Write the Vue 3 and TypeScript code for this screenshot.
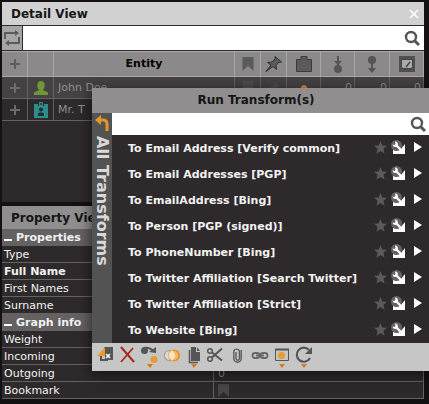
<script setup lang="ts">
import { ref } from 'vue'

interface Entity { name: string; kind: 'person' | 'badge'; counts: number[] }
interface Property { label: string; value: string; bold?: boolean }
interface Group { title: string; rows: Property[] }

const entityFilter = ref('')
const transformFilter = ref('')

const entities: Entity[] = [
  { name: 'John Doe', kind: 'person', counts: [0, 0, 0] },
  { name: 'Mr. T', kind: 'badge', counts: [] },
]

const groups: Group[] = [
  {
    title: 'Properties',
    rows: [
      { label: 'Type', value: '' },
      { label: 'Full Name', value: '', bold: true },
      { label: 'First Names', value: '' },
      { label: 'Surname', value: '' },
    ],
  },
  {
    title: 'Graph info',
    rows: [
      { label: 'Weight', value: '' },
      { label: 'Incoming', value: '' },
      { label: 'Outgoing', value: '0' },
      { label: 'Bookmark', value: 'bookmark' },
    ],
  },
]

const transforms: string[] = [
  'To Email Address [Verify common]',
  'To Email Addresses [PGP]',
  'To EmailAddress [Bing]',
  'To Person [PGP (signed)]',
  'To PhoneNumber [Bing]',
  'To Twitter Affiliation [Search Twitter]',
  'To Twitter Affiliation [Strict]',
  'To Website [Bing]',
]
</script>

<template>
  <main class="desk">
    <section class="panel detail">
      <header class="title active">
        <h2>Detail View</h2>
        <button class="close" aria-label="Close">
          <svg width="10" height="10" viewBox="0 0 10 10"><path d="M1 1l8 8M9 1L1 9" stroke="#fff" stroke-width="1.5" /></svg>
        </button>
      </header>
      <div class="search">
        <button class="swap" aria-label="Synchronise">
          <svg width="18" height="18" viewBox="0 0 18 18" fill="none" stroke="#5c5c5c" stroke-width="2">
            <path d="M2 10V4h11M16 8v6H5" />
            <path d="M12 1l4 3-4 3zM6 11l-4 3 4 3z" fill="#5c5c5c" stroke="none" />
          </svg>
        </button>
        <input v-model="entityFilter" type="text" aria-label="Filter entities" />
        <button class="find" aria-label="Search">
          <svg width="16" height="16" viewBox="0 0 16 16" fill="none" stroke="#565656"><circle cx="7" cy="7" r="5" stroke-width="2.400" /><path d="M10.500 10.500l4.500 4.500" stroke-width="3" /></svg>
        </button>
      </div>
      <table class="entities">
        <colgroup>
          <col class="c26" /><col class="c26" /><col /><col class="c26" /><col class="c26" />
          <col class="c34" /><col class="c34" /><col class="c35" /><col class="c34" />
        </colgroup>
        <thead>
          <tr>
            <th><svg width="10" height="10" viewBox="0 0 10 10"><path d="M5 0v10M0 5h10" stroke="#5f5d5e" stroke-width="2" /></svg></th>
            <th></th>
            <th>Entity</th>
            <th><svg width="12" height="16" viewBox="0 0 12 16"><path d="M.500 1h11v14L6 10 .500 15z" fill="#5b5b5b" /></svg></th>
            <th>
              <svg width="18" height="18" viewBox="0 0 18 18"><path d="M10 1.500l6.500 5.500-3 .500-2.500 3 .500 4-3.500-3L1 16.500l5-6.500-3.500-2.500 4.500-.500 3-3z" fill="#5b5b5b" stroke="#303030" /></svg>
            </th>
            <th><svg width="16" height="16" viewBox="0 0 16 16"><path d="M.500 3.500H5v-3h6v3h4.500v12H.500z" fill="#5b5b5b" stroke="#3d3d3d" /></svg></th>
            <th><svg width="10" height="17" viewBox="0 0 10 17"><path d="M5 0v10" stroke="#555" stroke-width="2" /><path d="M1 5h8l-4 4z" fill="#555" /><circle cx="5" cy="13" r="4" fill="#555" /></svg></th>
            <th><svg width="10" height="17" viewBox="0 0 10 17"><path d="M5 4v9" stroke="#555" stroke-width="2" /><circle cx="5" cy="4" r="4" fill="#555" /><path d="M1 12h8l-4 5z" fill="#555" /></svg></th>
            <th><svg width="16" height="16" viewBox="0 0 16 16"><path d="M0 0h16v16H0z" fill="#505050" /><path d="M2.500 3.500h11v7l-1 2h-9l-1-2z" fill="#aaa" stroke="#444" /><path d="M7 11l4-5" stroke="#444" stroke-width="1.500" /></svg></th>
          </tr>
        </thead>
        <tbody>
          <tr v-for="e in entities" :key="e.name">
            <td><svg width="10" height="10" viewBox="0 0 10 10"><path d="M5 0v10M0 5h10" stroke="#6d6a6b" stroke-width="2" /></svg></td>
            <td>
              <svg v-if="e.kind === 'person'" width="14" height="14" viewBox="0 0 14 14"><ellipse cx="7" cy="4.500" rx="3.700" ry="4.500" fill="#719639" /><path d="M5 7h4v2l5 2.500V14H0v-2.500L5 9z" fill="#719639" /></svg>
              <svg v-else width="14" height="16" viewBox="0 0 14 16"><path d="M0 2h4v2h1V0h4v4h1V2h4v14H0z" fill="#2e8d8b" /><circle cx="7" cy="2" r="1" fill="#1c3d3d" /><circle cx="7" cy="7.500" r="2" fill="#1c3030" /><path d="M4 14v-2.500l2-1h2l2 1V14z" fill="#1c3030" /></svg>
            </td>
            <td class="name">{{ e.name }}</td>
            <td><svg width="10" height="14" viewBox="0 0 10 14"><path d="M0 0h10v14l-5-4-5 4z" fill="#504d4e" /></svg></td>
            <td><svg width="14" height="14" viewBox="0 0 18 18"><path d="M10 1l7 6-3 .500-3 3 .500 4-3.500-3L1 17l5-7-3.500-2.500 4.500-.500 3-3z" fill="#504d4e" /></svg></td>
            <td><svg width="8" height="8" viewBox="0 0 8 8"><circle cx="4" cy="4" r="3" fill="#dc8b22" /></svg></td>
            <td v-for="n in 3" :key="n" class="count">{{ e.counts[n - 1] }}</td>
          </tr>
        </tbody>
      </table>
    </section>

    <section class="panel property">
      <header class="title"><h2>Property View</h2></header>
      <table class="props">
        <tbody v-for="g in groups" :key="g.title">
          <tr class="group"><th colspan="2"><span class="minus"></span>{{ g.title }}</th></tr>
          <tr v-for="p in g.rows" :key="p.label">
            <th :class="{ strong: p.bold }">{{ p.label }}</th>
            <td>
              <svg v-if="p.value === 'bookmark'" width="11" height="13" viewBox="0 0 11 13"><path d="M0 0h11v13l-5.500-5L0 13z" fill="#484647" /></svg>
              <template v-else>{{ p.value }}</template>
            </td>
          </tr>
        </tbody>
      </table>
    </section>

    <section class="popup">
      <h2 class="caption">Run Transform(s)</h2>
      <div class="body">
        <button class="side">
          <svg width="14" height="17" viewBox="0 0 14 17"><path d="M4 5h4q4 0 4 4v7" fill="none" stroke="#e5962b" stroke-width="3" /><path d="M0 5l6-5v10z" fill="#e5962b" /></svg>
          <span>All Transforms</span>
        </button>
        <div class="main">
          <div class="filter">
            <input v-model="transformFilter" type="text" aria-label="Filter transforms" />
            <button class="find" aria-label="Search">
              <svg width="16" height="16" viewBox="0 0 16 16" fill="none" stroke="#565656"><circle cx="7" cy="7" r="5" stroke-width="2.400" /><path d="M10.500 10.500l4.500 4.500" stroke-width="3" /></svg>
            </button>
          </div>
          <ul>
            <li v-for="t in transforms" :key="t">
              <button class="run">{{ t }}</button>
              <button aria-label="Favourite">
                <svg width="13" height="13" viewBox="0 0 13 13"><path d="M6.500 0l1.800 4.500 4.700.300-3.600 3 1.200 5-4.100-2.800L2.400 12.800l1.200-5L0 4.800l4.700-.300z" fill="#5c5a5b" /></svg>
              </button>
              <button class="tool" aria-label="Configure">
                <svg width="14" height="14" viewBox="0 0 14 14"><path d="M2 14V9l7 1 5-6v10z" fill="#fff" /><circle cx="5.500" cy="5.500" r="5.500" fill="#656364" /><path d="M5 5l5 5" stroke="#fff" stroke-width="2.200" stroke-linecap="round" /><path d="M4 1.500a2.700 2.700 0 1 1-2.500 3l2 .500 1-1z" fill="#fff" /></svg>
              </button>
              <button class="go" aria-label="Open">
                <svg width="8" height="10" viewBox="0 0 8 10"><path d="M0 0l8 5-8 5z" fill="#fff" /></svg>
              </button>
            </li>
          </ul>
        </div>
      </div>
      <div class="tools">
        <button aria-label="Move to new graph">
          <svg width="22" height="24" viewBox="0 0 22 24"><path d="M9 3h9v13H9z" fill="#555" /><path d="M5 12v5h8v-2H7v-3z" fill="#555" /><path d="M7 11h3v4H7z" fill="#c6c6c6" /><path d="M10 3v9H2z" fill="#e99c2c" /><path d="M11 10l4 4M15 10l-4 4" stroke="#fff" stroke-width="1.500" /></svg>
        </button>
        <button aria-label="Delete">
          <svg width="22" height="24" viewBox="0 0 22 24" fill="none" stroke="#a82420"><path d="M4 3l13 15" stroke-width="2" /><path d="M16 4L4 18" stroke-width="1.700" /></svg>
        </button>
        <button aria-label="Change type">
          <svg width="22" height="24" viewBox="0 0 22 24"><circle cx="5.500" cy="6.500" r="3.500" fill="#555" /><path d="M5 4q6-1 9 3" fill="none" stroke="#555" stroke-width="2" /><path d="M17 3v6l-7-1z" fill="#555" /><circle cx="15" cy="15.500" r="3.500" fill="#e89c2c" /><path d="M8 20h6l-3 4z" fill="#d97813" /></svg>
        </button>
        <button aria-label="Merge">
          <svg width="22" height="24" viewBox="0 0 22 24"><circle cx="8.500" cy="11.500" r="5.500" fill="#999" /><circle cx="8.500" cy="11.500" r="4.500" fill="#dedbd6" /><circle cx="13" cy="11.500" r="6" fill="#e59326" /><circle cx="12.500" cy="11.500" r="4.500" fill="#f2bd70" /><path d="M11 6q6 5.500 0 11-7-5.500 0-11" fill="#fbf4e5" opacity=".7" /></svg>
        </button>
        <button aria-label="Copy">
          <svg width="22" height="24" viewBox="0 0 22 24"><path d="M8 3h5v5h4v9H8z" fill="#555" /><path d="M14 3l3 4h-3z" fill="#555" /><path d="M6.500 6v12.500H15" fill="none" stroke="#555" stroke-width="1.500" /><path d="M8 20h6l-3 4z" fill="#d97813" /></svg>
        </button>
        <button aria-label="Cut">
          <svg width="22" height="24" viewBox="0 0 22 24" fill="none" stroke="#555" stroke-width="1.500"><circle cx="5" cy="7" r="2.300" /><circle cx="5" cy="15" r="2.300" /><path d="M7 8.500l10 8M7 13.500l10-9" stroke-width="2" /></svg>
        </button>
        <button aria-label="Attach">
          <svg width="22" height="24" viewBox="0 0 22 24" fill="none" stroke="#5b5b5b" stroke-width="1.400"><path d="M9 8v6.500a1.700 1.700 0 0 0 3.400 0V7a3 3 0 0 0-5.600 0v7.500a3.700 3.700 0 0 0 7.400 0V6" /></svg>
        </button>
        <button aria-label="Link">
          <svg width="22" height="24" viewBox="0 0 22 24" fill="none" stroke="#666" stroke-width="1.800"><rect x="3.500" y="9" width="7" height="5" rx="2.500" /><rect x="11.500" y="9" width="7" height="5" rx="2.500" /><path d="M7 11.500h8" /></svg>
        </button>
        <button aria-label="Selection">
          <svg width="22" height="24" viewBox="0 0 22 24"><path d="M4.500 5.500h13v11h-13z" fill="none" stroke="#555" /><path d="M4 5.500h14" stroke="#555" stroke-width="2" /><circle cx="10.500" cy="11.500" r="3.500" fill="#e89c2c" /><path d="M8 20h6l-3 4z" fill="#d97813" /></svg>
        </button>
        <button aria-label="Refresh">
          <svg width="22" height="24" viewBox="0 0 22 24"><path d="M16 6A7 7 0 1 0 17 14" fill="none" stroke="#555" stroke-width="2.200" /><path d="M19 3v7h-7z" fill="#555" /><path d="M8 20h6l-3 4z" fill="#d97813" /></svg>
        </button>
      </div>
    </section>
  </main>
</template>

<style>
body { margin: 0; background: #151012; }
</style>

<style scoped>
* { box-sizing: border-box; }
.desk {
  position: relative;
  display: flex;
  flex-direction: column;
  gap: 4px;
  min-height: 100vh;
  padding: 2px 5px 2px 2px;
  overflow: hidden;
  background: #151012;
  font-family: "DejaVu Sans", sans-serif;
  font-size: 11px;
  color: #f2f2f2;
}
button { padding: 0; border: 0; background: none; font: inherit; color: inherit; }
button, th, td { line-height: 16px; }
svg { display: block; }
h2 { margin: 0; font-size: 12px; font-weight: bold; line-height: 24px; color: #151515; }
input { min-width: 0; flex: 1; align-self: stretch; padding: 0 4px; border: 0; outline: 0; background: #fff; font: inherit; }
table { width: 100%; border-spacing: 0; table-layout: fixed; }
th, td { padding: 0; }

.panel { background: #2e2a2b; }
.detail { min-height: 200px; }
.title { display: flex; align-items: center; justify-content: space-between; height: 23px; padding: 0 5px 0 9px; background: #908e8f; }
.title.active { background: #d1d1d1; }
.search { display: flex; align-items: center; height: 26px; background: #fff; border-top: 1px solid #2e2a2b; border-bottom: 1px solid #2e2a2b; }
.swap { display: flex; align-items: center; justify-content: center; align-self: stretch; width: 21px; background: #a6a6a6; border-right: 1px solid #2e2a2b; }
.find { padding: 0 4px; }

.c26 { width: 26px; }
.c34 { width: 34px; }
.c35 { width: 35px; }
.entities svg { margin: 0 auto; }
.entities th { height: 26px; background: #8b8989; border-right: 1px solid #aaa8a9; border-top: 1px solid #aaa8a9; border-bottom: 1px solid #aaa8a9; color: #000; }
.entities td { height: 22px; border-right: 1px solid #656263; border-bottom: 1px solid #656263; color: #929091; }
.entities tbody tr:first-child td { background: #464243; }
.entities .name { padding-left: 4px; }
.entities .count { padding-right: 2px; text-align: right; }

.props th, .props td { height: 17px; padding: 1px 0 0 2px; border-bottom: 1px solid #656263; font-weight: normal; text-align: left; line-height: 15px; }
.props td { padding-left: 4px; border-left: 1px solid #656263; border-right: 1px solid #656263; color: #929091; }
.props .strong, .props .group th { font-weight: bold; }
.props .group th { background: #636162; border-color: #636162; }
.minus { display: inline-block; width: 8px; height: 2px; margin-right: 4px; background: #fff; }

.popup { position: absolute; top: 88px; left: 92px; right: 0; box-shadow: 0 3px 12px 2px rgba(0, 0, 0, .5); background: #2e2a2b; }
.caption { padding-right: 9px; line-height: 25px; text-align: center; background: #908e8f; }
.body { display: flex; }
.side { display: flex; flex-direction: column; align-items: center; gap: 4px; width: 20px; padding-top: 2px; background: #535353; color: #d9d9d9; }
.side span { writing-mode: vertical-rl; font-size: 16px; font-weight: bold; line-height: 18px; white-space: nowrap; }
.main { flex: 1; min-width: 0; }
.filter { display: flex; align-items: center; height: 22px; background: #fff; }
.filter .find { padding: 0 3px; }
ul { margin: 0; padding: 0; list-style: none; }
li { display: flex; align-items: center; height: 26px; padding: 0 7px 2px 16px; }
.run { flex: 1; min-width: 0; padding-top: 4px; font-weight: bold; text-align: left; white-space: nowrap; }
.tool { margin: 0 9px 0 4px; }
.tools { display: flex; align-items: flex-start; height: 28px; padding: 1px 3px; background: #c6c6c6; }
</style>
